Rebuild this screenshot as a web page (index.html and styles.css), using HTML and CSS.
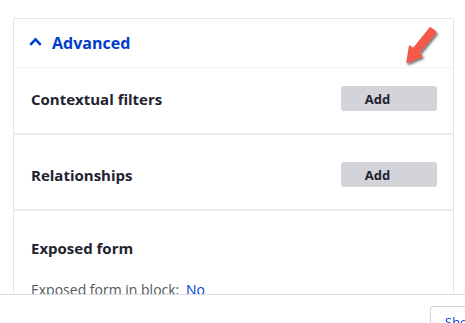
FILE: index.html
```html
<!DOCTYPE html>
<html lang="en">
<head>
  <meta charset="UTF-8" />
  <title>Advanced</title>
  <link rel="stylesheet" href="styles.css">
</head>
<body>
  <div class="page">
    <div class="card">
      <div class="card-head">
        <svg class="chevron" width="13" height="9" viewBox="0 0 13 9"><path d="M1.3 7.8 L6.5 2.4 L11.7 7.8" fill="none" stroke="#003ecc" stroke-width="2.6"/></svg>
        <span>Advanced</span>
      </div>

      <div class="row first">
        <h3>Contextual filters</h3>
        <button class="add">Add</button>
      </div>

      <div class="row">
        <h3>Relationships</h3>
        <button class="add">Add</button>
      </div>

      <div class="row last">
        <div>
          <h3>Exposed form</h3>
          <p class="setting">Exposed form in block: <a href="#">No</a></p>
        </div>
      </div>
    </div>
  </div>

  <svg class="pointer" width="50" height="52" viewBox="0 0 50 52">
    <defs>
      <filter id="shade" x="-30%" y="-30%" width="160%" height="160%">
        <feDropShadow dx="1.5" dy="2" stdDeviation="1.2" flood-color="#000" flood-opacity="0.55"/>
      </filter>
    </defs>
    <polygon points="7,42.5 9.6,26.1 13.1,28.9 30.3,7.8 35.7,12.2 18.5,33.3 22,36.1" fill="#f4594a" stroke="#f4594a" stroke-width="1.5" stroke-linejoin="round" filter="url(#shade)"/>
  </svg>

  <div class="footer">
    <button class="show">Show</button>
  </div>
</body>
</html>
```

FILE: styles.css
```css
* {
  margin: 0;
  padding: 0;
  box-sizing: border-box;
}

body {
  font-family: 'Open Sans', 'Noto Sans', sans-serif;
  background: #fff;
  color: #222330;
  overflow: hidden;
}

.page {
  padding: 18px 11px 0 13px;
}

.card {
  border: 1px solid #e6e6ea;
  border-bottom: none;
  border-radius: 2px;
  width: 441px;
}

.card-head {
  height: 49px;
  display: flex;
  align-items: center;
  gap: 10px;
  padding-left: 15px;
  color: #003ecc;
  font-weight: 700;
  font-size: 16px;
  border-bottom: 1px solid #f4f4f6;
  background: #fff;
}

.chevron {
  margin-top: -3px;
}

.row {
  display: flex;
  justify-content: space-between;
  align-items: center;
  padding: 27px 16px 22px 17px;
  border-bottom: 2px solid #ececef;
}

.row.first {
  padding-top: 18px;
}

.row.last {
  border-bottom: none;
  padding-top: 27px;
  height: 120px;
  align-items: flex-start;
}

.row h3 {
  font-size: 15px;
  font-weight: 700;
  line-height: 20px;
}

.add {
  width: 96px;
  height: 25px;
  border: none;
  border-radius: 3px;
  background: #d3d4d9;
  color: #222330;
  font-family: inherit;
  font-weight: 700;
  font-size: 13px;
  padding-right: 23px;
}

.setting {
  margin-top: 22px;
  font-size: 14px;
  color: #55565b;
}

.setting a {
  color: #003ecc;
  text-decoration: none;
  margin-left: 3px;
}

.pointer {
  position: absolute;
  left: 400px;
  top: 20px;
}

.footer {
  position: fixed;
  left: 0;
  right: 0;
  bottom: 0;
  height: 29px;
  background: #fff;
  border-top: 1px solid #dedee2;
  padding: 11px 0 0 430px;
}

.show {
  height: 30px;
  padding: 0 14px;
  border: 1px solid #d4d4d8;
  border-bottom: none;
  border-radius: 4px 4px 0 0;
  background: #fff;
  color: #003ecc;
  font-family: inherit;
  font-size: 13px;
  display: block;
  text-align: left;
}
```
